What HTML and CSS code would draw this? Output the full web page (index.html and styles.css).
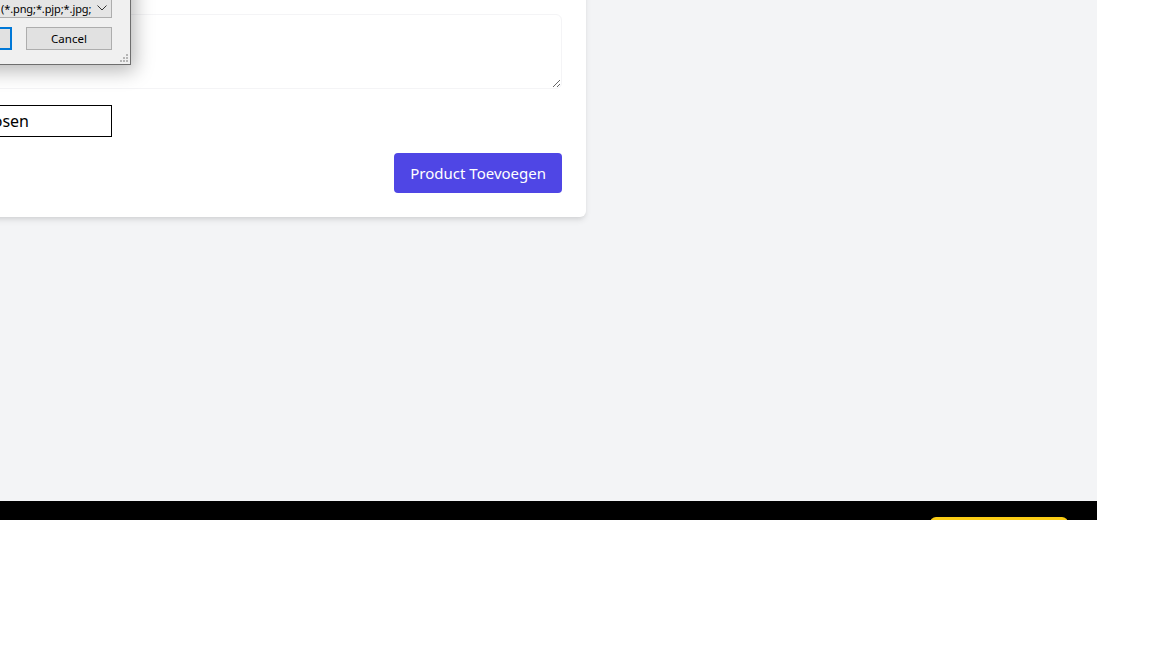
FILE: index.html
```html
<!DOCTYPE html>
<html lang="nl">
<head>
    <meta charset="UTF-8">
    <meta name="viewport" content="width=device-width, initial-scale=1.0">
    <title>Product Toevoegen</title>
    <link rel="stylesheet" href="styles.css">
</head>
<body>
    <div class="app">
        <!-- Main content -->
        <main class="main">
            <form class="card">
                <label class="field-label" for="beschrijving">Beschrijving</label>
                <textarea id="beschrijving" class="textarea"></textarea>

                <div class="file-box">
                    <span class="file-text">No file chosen</span>
                </div>

                <div class="actions">
                    <button type="button" class="submit-btn">Product Toevoegen</button>
                </div>
            </form>
        </main>

        <!-- Footer -->
        <footer class="footer">
            <button type="button" class="footer-btn">Contact</button>
        </footer>
    </div>

    <!-- Open file dialog (over the page) -->
    <div class="dialog">
        <div class="dialog-row">
            <div class="dropdown">
                <span class="dropdown-text">(*.png;*.pjp;*.jpg;</span>
                <svg class="chevron" width="10" height="6" viewBox="0 0 10 6">
                    <path d="M0.5 0.5 L5 5 L9.5 0.5" fill="none" stroke="#333" stroke-width="1"/>
                </svg>
            </div>
        </div>
        <div class="dialog-row buttons">
            <div class="win-btn primary">Open</div>
            <div class="win-btn">Cancel</div>
        </div>
        <svg class="grip" width="8" height="8" viewBox="0 0 8 8">
            <rect x="6" y="0" width="2" height="2" fill="#b5b5b5"/>
            <rect x="3" y="3" width="2" height="2" fill="#b5b5b5"/>
            <rect x="6" y="3" width="2" height="2" fill="#b5b5b5"/>
            <rect x="0" y="6" width="2" height="2" fill="#b5b5b5"/>
            <rect x="3" y="6" width="2" height="2" fill="#b5b5b5"/>
            <rect x="6" y="6" width="2" height="2" fill="#b5b5b5"/>
        </svg>
    </div>
</body>
</html>
```

FILE: styles.css
```css
* {
    margin: 0;
    padding: 0;
    box-sizing: border-box;
}

body {
    background-color: #ffffff;
    font-family: "Noto Sans", "Open Sans", sans-serif;
    overflow: hidden;
}

.app {
    width: 1097px;
    height: 520px;
    overflow: hidden;
    display: flex;
    flex-direction: column;
}

.main {
    height: 501px;
    flex-shrink: 0;
    background-color: #f3f4f6;
}

.card {
    width: 646px;
    margin-left: -60px;
    margin-top: -42px;
    padding: 24px;
    background-color: #ffffff;
    border-radius: 6px;
    box-shadow: 0 4px 6px -1px rgba(0, 0, 0, 0.1), 0 2px 4px -1px rgba(0, 0, 0, 0.06);
    display: flex;
    flex-direction: column;
}

.field-label {
    display: block;
    height: 24px;
    margin-bottom: 8px;
    font-size: 14px;
    color: #374151;
}

.textarea {
    width: 100%;
    height: 75px;
    border: 1px solid #f4f4f6;
    border-radius: 6px;
    resize: vertical;
    outline: none;
}

.file-box {
    width: 258px;
    height: 32px;
    margin-left: -110px;
    margin-top: 16px;
    padding-right: 82px;
    border: 1px solid #000000;
    display: flex;
    align-items: center;
    justify-content: flex-end;
    font-size: 16px;
    color: #000000;
    white-space: nowrap;
}

.actions {
    display: flex;
    justify-content: flex-end;
    margin-top: 16px;
}

.submit-btn {
    height: 40px;
    padding: 0 16px;
    border: none;
    border-radius: 4px;
    background-color: #4f46e5;
    color: #ffffff;
    font-family: "Noto Sans", sans-serif;
    font-size: 15px;
    cursor: pointer;
}

.footer {
    height: 60px;
    flex-shrink: 0;
    background-color: #000000;
    padding: 16px 29px;
    display: flex;
    justify-content: flex-end;
}

.footer-btn {
    width: 138px;
    height: 40px;
    border: none;
    border-radius: 6px;
    background-color: #facc15;
    color: #000000;
}

/* Windows style file dialog */
.dialog {
    position: absolute;
    left: -290px;
    top: -400px;
    width: 421px;
    height: 465px;
    background-color: #f0f0f0;
    border: 1px solid #6e6e6e;
    box-shadow: 4px 6px 18px rgba(0, 0, 0, 0.28);
    display: flex;
    flex-direction: column;
    justify-content: flex-end;
    padding: 0 18px 14px 0;
    font-family: "Noto Sans", sans-serif;
    font-size: 11.5px;
    color: #000000;
}

.dialog-row {
    display: flex;
    justify-content: flex-end;
}

.dropdown {
    width: 123px;
    height: 20px;
    border: 1px solid #adadad;
    background-color: #e5e5e5;
    display: flex;
    align-items: center;
    padding-left: 11px;
    padding-right: 4px;
}

.dropdown-text {
    flex: 1;
    overflow: hidden;
    white-space: nowrap;
    font-size: 11px;
    letter-spacing: -0.1px;
    line-height: 17px;
    margin-right: 2px;
}

.chevron {
    flex-shrink: 0;
}

.buttons {
    margin-top: 9px;
    gap: 14px;
}

.win-btn {
    width: 86px;
    height: 23px;
    border: 1px solid #adadad;
    background-color: #e1e1e1;
    display: flex;
    align-items: center;
    justify-content: center;
}

.win-btn.primary {
    border: 2px solid #0078d7;
}

.grip {
    position: absolute;
    right: 2px;
    bottom: 2px;
}
```
